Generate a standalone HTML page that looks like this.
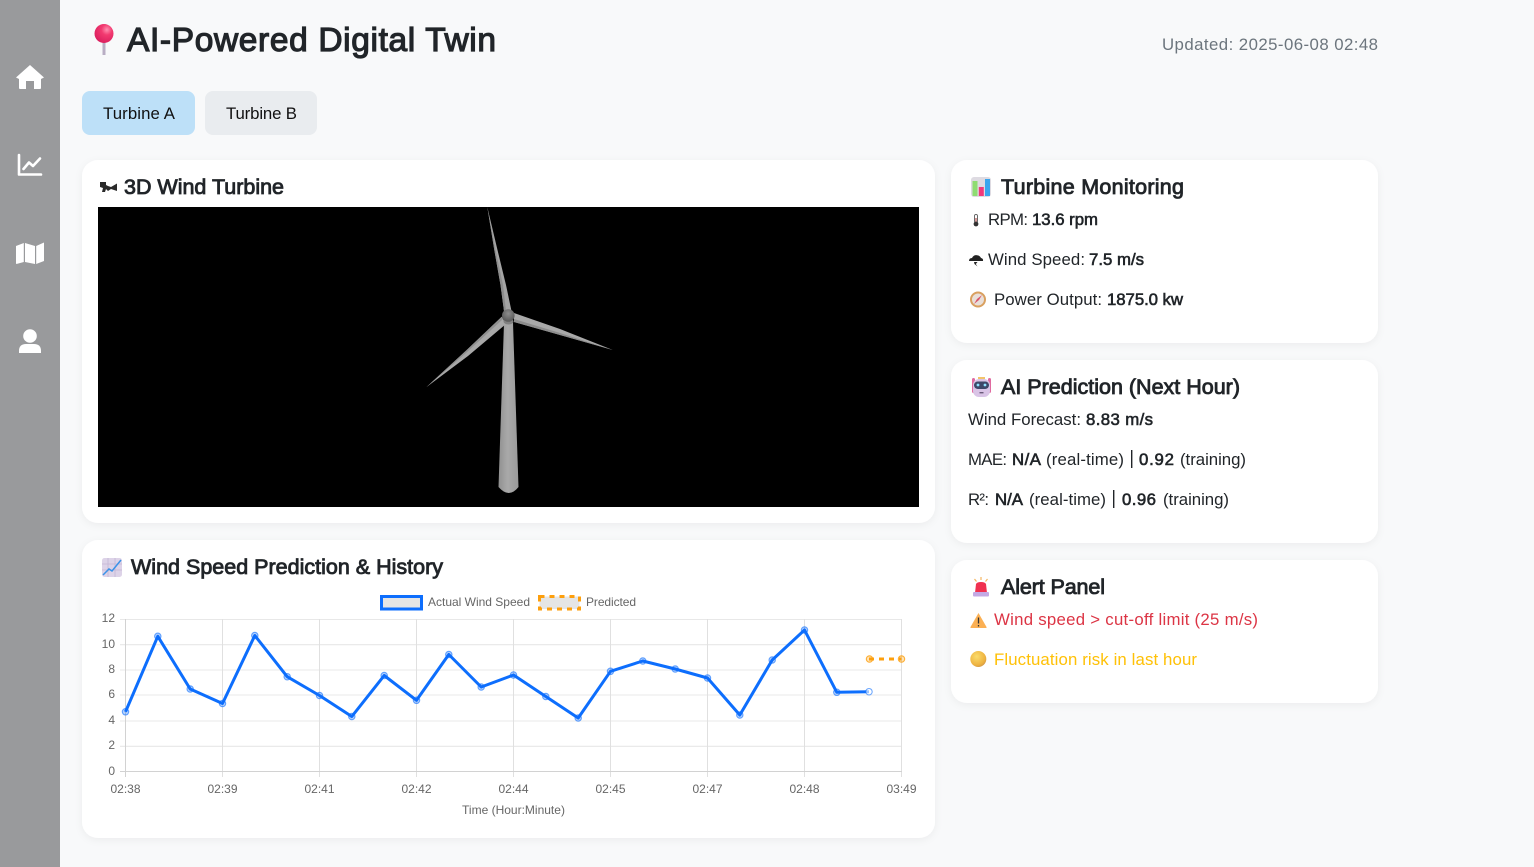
<!DOCTYPE html>
<html lang="en">
<head>
<meta charset="utf-8">
<title>AI-Powered Digital Twin</title>
<style>
html,body{margin:0;padding:0;width:1534px;height:867px;overflow:hidden;background:#f8f9fa}
svg{display:block;position:absolute;left:0;top:0}
text{font-family:"Liberation Sans",sans-serif;white-space:pre}
.h{font-size:21.5px;fill:#212529;stroke:#212529;stroke-width:.85}
.b{font-size:16.8px;fill:#212529}
.s{font-size:16.8px;fill:#212529;stroke:#212529;stroke-width:.6}
.c{font-size:12px;fill:#666}
.m{text-anchor:middle}
.e{text-anchor:end}
</style>
</head>
<body>
<svg width="1534" height="867" viewBox="0 0 1534 867" xmlns="http://www.w3.org/2000/svg">
<defs>
<filter id="sh" x="-5%" y="-5%" width="110%" height="110%"><feDropShadow dx="0" dy="2" stdDeviation="4" flood-color="#000" flood-opacity=".05"/></filter>
<linearGradient id="tower" x1="0" x2="1" y1="0" y2="0"><stop offset="0" stop-color="#909090"/><stop offset=".45" stop-color="#a9a9a9"/><stop offset="1" stop-color="#9a9a9a"/></linearGradient>
<radialGradient id="pin" cx=".65" cy=".3" r=".8"><stop offset="0" stop-color="#ff8fb0"/><stop offset=".35" stop-color="#f23a70"/><stop offset="1" stop-color="#d81b5c"/></radialGradient>
<radialGradient id="hub" cx=".5" cy=".35" r=".6"><stop offset="0" stop-color="#8c8c8c"/><stop offset="1" stop-color="#5a5a5a"/></radialGradient>
<radialGradient id="gold" cx=".4" cy=".35" r=".75"><stop offset="0" stop-color="#fbdc6b"/><stop offset=".7" stop-color="#eeb340"/><stop offset="1" stop-color="#c98f4a"/></radialGradient>
</defs>

<!-- Sidebar -->
<rect x="0" y="0" width="60" height="867" fill="#999a9c"/>
<path d="M30 65 L44 77.5 L41 79 L41 88 Q41 89 40 89 L34 89 L34 81 L26 81 L26 89 L20 89 Q19 89 19 88 L19 79 L16 77.5 Z" fill="#fff"/>
<path d="M19 155 L19 174.500 L41 174.500" fill="none" stroke="#fff" stroke-width="2.600" stroke-linecap="round" stroke-linejoin="round"/>
<path d="M23.500 169 L29 162.500 L33 166 L40 158.500" fill="none" stroke="#fff" stroke-width="2.600" stroke-linecap="round" stroke-linejoin="round"/>
<path d="M16 246 L23.800 243 L23.800 262 L16.500 264 Q16 264 16 263 Z M25 243 L35 246 L35 264 L25 262 Z M36.200 246 L44 242.500 L44 261 L36.200 264 Z" fill="#fff"/>
<circle cx="30" cy="336" r="6.800" fill="#fff"/>
<path d="M19 353 L19 351 Q19 344 26 344 L34 344 Q41 344 41 351 L41 353 Z" fill="#fff"/>

<!-- Header -->
<rect x="102.500" y="40" width="3" height="15" fill="#b9aec4"/>
<circle cx="104" cy="33.500" r="9.500" fill="url(#pin)"/>
<text x="127" y="51" font-size="33.500" fill="#212529" stroke="#212529" stroke-width="1.200" textLength="369" lengthAdjust="spacing">AI-Powered Digital Twin</text>
<text x="1162" y="50" font-size="16.800" fill="#6c757d" textLength="216" lengthAdjust="spacing">Updated: 2025-06-08 02:48</text>

<!-- Buttons -->
<rect x="82" y="91" width="113" height="44" rx="8" fill="#bde0f8"/>
<rect x="205" y="91" width="112" height="44" rx="8" fill="#e9ecef"/>
<text x="103" y="119" font-size="16.800" fill="#111" textLength="72" lengthAdjust="spacing">Turbine A</text>
<text x="226" y="119" font-size="16.800" fill="#111" textLength="71" lengthAdjust="spacing">Turbine B</text>

<!-- Cards -->
<g fill="#fff" filter="url(#sh)">
<rect x="82" y="160" width="853" height="363" rx="16"/>
<rect x="82" y="540" width="853" height="298" rx="16"/>
<rect x="951" y="160" width="427" height="183" rx="16"/>
<rect x="951" y="360" width="427" height="183" rx="16"/>
<rect x="951" y="560" width="427" height="143" rx="16"/>
</g>

<!-- 3D Turbine card -->
<path d="M100 182 L106 182 L106 185 L108 186 L111 187 L117 183.500 L117 191 L111 189 L108 191 L106 189 L105 192 L102 192 L103 188 L100 187 Z" fill="#2a2a2a"/>
<text class="h" x="124" y="194" textLength="160" lengthAdjust="spacing">3D Wind Turbine</text>
<rect x="98" y="207" width="821" height="300" fill="#000"/>
<path d="M504 323 L513 323 L518.500 487 Q509 499 498.500 487 Z" fill="url(#tower)"/>
<path d="M487.300 207 L497.500 250 L506 285 L511.500 311 L504 311 L500.500 285 L494.300 250 Z" fill="#a4a4a4"/>
<path d="M487.300 207 L495.500 250 L503 285 L506 311 L504 311 L500.500 285 L494.300 250 Z" fill="#8d8d8d"/>
<path d="M514 313 L560 329 L612.800 350 L560 335 L514 322 Z" fill="#a9a9a9"/>
<path d="M514 319 L560 333 L612.800 350 L560 335 L514 322 Z" fill="#8c8c8c"/>
<path d="M426.300 387.200 L466.700 350 L501.700 316.700 L506 324 L468 356 Z" fill="#a8a8a8"/>
<path d="M426.300 387.200 L466.700 350 L501.700 316.700 L503 319 L466 353 Z" fill="#909090"/>
<ellipse cx="508.500" cy="321.500" rx="5" ry="3" fill="#808080"/>
<circle cx="508.300" cy="315.500" r="6.300" fill="url(#hub)"/>

<!-- Chart card -->
<rect x="102" y="558" width="20" height="19" rx="2.500" fill="#ddd3e8"/>
<path d="M102 564 H122 M102 570 H122 M108 558 V577 M115 558 V577" stroke="#c3b6d4" stroke-width=".8"/>
<path d="M103 575 L109 569 L112 571 L121 560" fill="none" stroke="#3b93e8" stroke-width="1.500"/>
<text class="h" x="131" y="574" textLength="312" lengthAdjust="spacing">Wind Speed Prediction &amp; History</text>

<rect x="381.500" y="596.500" width="40" height="12.500" fill="#e5e5e5" stroke="#0d6efd" stroke-width="3"/>
<text class="c" x="428" y="606" textLength="102" lengthAdjust="spacing">Actual Wind Speed</text>
<rect x="539.500" y="596.500" width="40" height="12.500" fill="#e5e5e5" stroke="#fd9f0d" stroke-width="3" stroke-dasharray="5 5"/>
<text class="c" x="586" y="606" textLength="50" lengthAdjust="spacing">Predicted</text>

<g stroke="#e8e8e8" stroke-width="1.100">
<path d="M120 619.500 H902 M120 644.700 H902 M120 670 H902 M120 695 H902 M120 721 H902 M120 746.300 H902"/>
</g>
<g stroke="#e0e0e0" stroke-width="1">
<path d="M222.500 619 V777 M319.500 619 V777 M416.500 619 V777 M513.500 619 V777 M610.500 619 V777 M707.500 619 V777 M804.500 619 V777 M901.500 619 V777"/>
</g>
<path d="M125.500 619 V777 M120 771.500 H902" stroke="#d2d2d2" stroke-width="1" fill="none"/>

<g class="c">
<text class="c e" x="115" y="622">12</text>
<text class="c e" x="115" y="648">10</text>
<text class="c e" x="115" y="673">8</text>
<text class="c e" x="115" y="698">6</text>
<text class="c e" x="115" y="724">4</text>
<text class="c e" x="115" y="749">2</text>
<text class="c e" x="115" y="775">0</text>
<text class="c m" x="125.500" y="793">02:38</text>
<text class="c m" x="222.500" y="793">02:39</text>
<text class="c m" x="319.500" y="793">02:41</text>
<text class="c m" x="416.500" y="793">02:42</text>
<text class="c m" x="513.500" y="793">02:44</text>
<text class="c m" x="610.500" y="793">02:45</text>
<text class="c m" x="707.500" y="793">02:47</text>
<text class="c m" x="804.500" y="793">02:48</text>
<text class="c m" x="901.500" y="793">03:49</text>
<text class="c m" x="513.500" y="814">Time (Hour:Minute)</text>
</g>

<polyline fill="none" stroke="#0d6efd" stroke-width="3" stroke-linejoin="round" points="125.500,711.800 157.800,636.300 190.200,689 222.500,703.500 254.800,635.500 287.200,676.700 319.500,695.500 351.800,716.500 384.200,675.500 416.500,700.300 448.800,654.500 481.200,687 513.500,675 545.800,696.500 578.200,718 610.500,671.300 642.800,661 675.200,669 707.500,678 739.800,715 772.200,660 804.500,630 836.800,692.300 869,691.700"/>
<g fill="#0d6efd" fill-opacity=".3" stroke="#0d6efd" stroke-opacity=".6" stroke-width="1.100">
<circle cx="125.500" cy="711.800" r="3.200"/><circle cx="157.800" cy="636.300" r="3.200"/><circle cx="190.200" cy="689" r="3.200"/><circle cx="222.500" cy="703.500" r="3.200"/><circle cx="254.800" cy="635.500" r="3.200"/><circle cx="287.200" cy="676.700" r="3.200"/><circle cx="319.500" cy="695.500" r="3.200"/><circle cx="351.800" cy="716.500" r="3.200"/><circle cx="384.200" cy="675.500" r="3.200"/><circle cx="416.500" cy="700.300" r="3.200"/><circle cx="448.800" cy="654.500" r="3.200"/><circle cx="481.200" cy="687" r="3.200"/><circle cx="513.500" cy="675" r="3.200"/><circle cx="545.800" cy="696.500" r="3.200"/><circle cx="578.200" cy="718" r="3.200"/><circle cx="610.500" cy="671.300" r="3.200"/><circle cx="642.800" cy="661" r="3.200"/><circle cx="675.200" cy="669" r="3.200"/><circle cx="707.500" cy="678" r="3.200"/><circle cx="739.800" cy="715" r="3.200"/><circle cx="772.200" cy="660" r="3.200"/><circle cx="804.500" cy="630" r="3.200"/><circle cx="836.800" cy="692.300" r="3.200"/>
<circle cx="869" cy="691.700" r="3.200" fill="#fff" fill-opacity=".6"/>
</g>
<path d="M869 659 H901.500" stroke="#fd9f0d" stroke-width="3" stroke-dasharray="5 5" fill="none"/>
<g fill="#fd9f0d" fill-opacity=".3" stroke="#fd9f0d" stroke-opacity=".8" stroke-width="1.100">
<circle cx="869.500" cy="659" r="3.200"/><circle cx="901.500" cy="659" r="3.200"/>
</g>

<!-- Turbine Monitoring -->
<rect x="971" y="177" width="20" height="20" rx="3" fill="#dedbe2"/>
<rect x="972.500" y="181" width="5" height="15" fill="#8fdc72"/>
<rect x="978.800" y="187" width="5" height="9" fill="#f0397b"/>
<rect x="985" y="179" width="5" height="17" fill="#3aa5ee"/>
<text class="h" x="1001" y="194" textLength="183" lengthAdjust="spacing">Turbine Monitoring</text>
<rect x="974.600" y="214.500" width="2.800" height="8" rx="1.200" fill="#fff" stroke="#444" stroke-width=".8"/>
<rect x="975.500" y="218" width="1" height="5" fill="#a33"/>
<circle cx="976" cy="224" r="2.400" fill="#333"/>
<path d="M969 261 Q969 258 972 258 Q973.500 254.800 977 255.200 Q980 255.500 981 258 Q983.500 258.500 983 261 Z M974 262 L977.500 262 L975.800 264 L977.500 266.500 L974.500 264 Z" fill="#222"/>
<text class="b" x="988" y="225" textLength="40" lengthAdjust="spacing">RPM:</text>
<text class="s" x="1032" y="225" textLength="66" lengthAdjust="spacing">13.6 rpm</text>
<text class="b" x="988" y="265" textLength="97" lengthAdjust="spacing">Wind Speed:</text>
<text class="s" x="1089" y="265" textLength="55" lengthAdjust="spacing">7.5 m/s</text>
<circle cx="978" cy="299.500" r="7" fill="#e9dfd8" stroke="#d9a05f" stroke-width="2"/>
<path d="M982 295 L979 300 L974 304 L977 299 Z" fill="#d9556a"/>
<text class="b" x="994" y="305" textLength="108" lengthAdjust="spacing">Power Output:</text>
<text class="s" x="1107" y="305" textLength="76" lengthAdjust="spacing">1875.0 kw</text>

<!-- AI Prediction -->
<rect x="972" y="378" width="3" height="15" rx="1.500" fill="#e06aa0"/>
<rect x="988" y="378" width="3" height="15" rx="1.500" fill="#e06aa0"/>
<rect x="978" y="377" width="7" height="2" fill="#f3c46b"/>
<rect x="973" y="379" width="17" height="18" rx="6" fill="#d9c4e6"/>
<rect x="974" y="381.500" width="15" height="7.500" rx="3.700" fill="#3d4868"/>
<circle cx="978" cy="385" r="1.400" fill="#8fe0ff"/><circle cx="985" cy="385" r="1.400" fill="#8fe0ff"/>
<rect x="979.500" y="392" width="4" height="1.400" fill="#6a5a7a"/>
<text class="h" x="1001" y="394" textLength="239" lengthAdjust="spacing">AI Prediction (Next Hour)</text>
<text class="b" x="968" y="425" textLength="113" lengthAdjust="spacing">Wind Forecast:</text>
<text class="s" x="1086" y="425" textLength="67" lengthAdjust="spacing">8.83 m/s</text>
<text class="b" x="968" y="465" textLength="39" lengthAdjust="spacing">MAE:</text>
<text class="s" x="1012" y="465" textLength="29" lengthAdjust="spacing">N/A</text>
<text class="b" x="1046" y="465" textLength="78" lengthAdjust="spacing">(real-time)</text>
<rect x="1131" y="450" width="1.400" height="18" fill="#212529"/>
<text class="s" x="1139" y="465" textLength="35" lengthAdjust="spacing">0.92</text>
<text class="b" x="1180" y="465" textLength="66" lengthAdjust="spacing">(training)</text>
<text class="b" x="968" y="505" textLength="21" lengthAdjust="spacing">R²:</text>
<text class="s" x="995" y="505" textLength="28" lengthAdjust="spacing">N/A</text>
<text class="b" x="1029" y="505" textLength="77" lengthAdjust="spacing">(real-time)</text>
<rect x="1113" y="490" width="1.400" height="18" fill="#212529"/>
<text class="s" x="1122" y="505" textLength="34" lengthAdjust="spacing">0.96</text>
<text class="b" x="1163" y="505" textLength="66" lengthAdjust="spacing">(training)</text>

<!-- Alert Panel -->
<path d="M975 593 L976 584 Q977 582 981 582 Q985 582 986 584 L987 593 Z" fill="#f0304f"/>
<rect x="973" y="592" width="16" height="4.500" rx="1" fill="#c3a9e4"/>
<path d="M981 577 V580 M974.500 579 L976.500 581.500 M987.500 579 L985.500 581.500" stroke="#f5b560" stroke-width="1.200"/>
<text class="h" x="1001" y="594" textLength="104" lengthAdjust="spacing">Alert Panel</text>
<path d="M978.500 613 L986.500 627 Q987 628 985.500 628 L971.500 628 Q970 628 970.500 627 Z" fill="#fbb054"/>
<path d="M978.500 617.500 V623.500 M978.500 625 V626.500" stroke="#333" stroke-width="1.300"/>
<text x="994" y="625" font-size="16.800" fill="#dc3545" textLength="264" lengthAdjust="spacing">Wind speed &gt; cut-off limit (25 m/s)</text>
<circle cx="978.300" cy="659" r="8" fill="url(#gold)"/>
<text x="994" y="665" font-size="16.800" fill="#ffc107" textLength="203" lengthAdjust="spacing">Fluctuation risk in last hour</text>
</svg>
</body>
</html>
